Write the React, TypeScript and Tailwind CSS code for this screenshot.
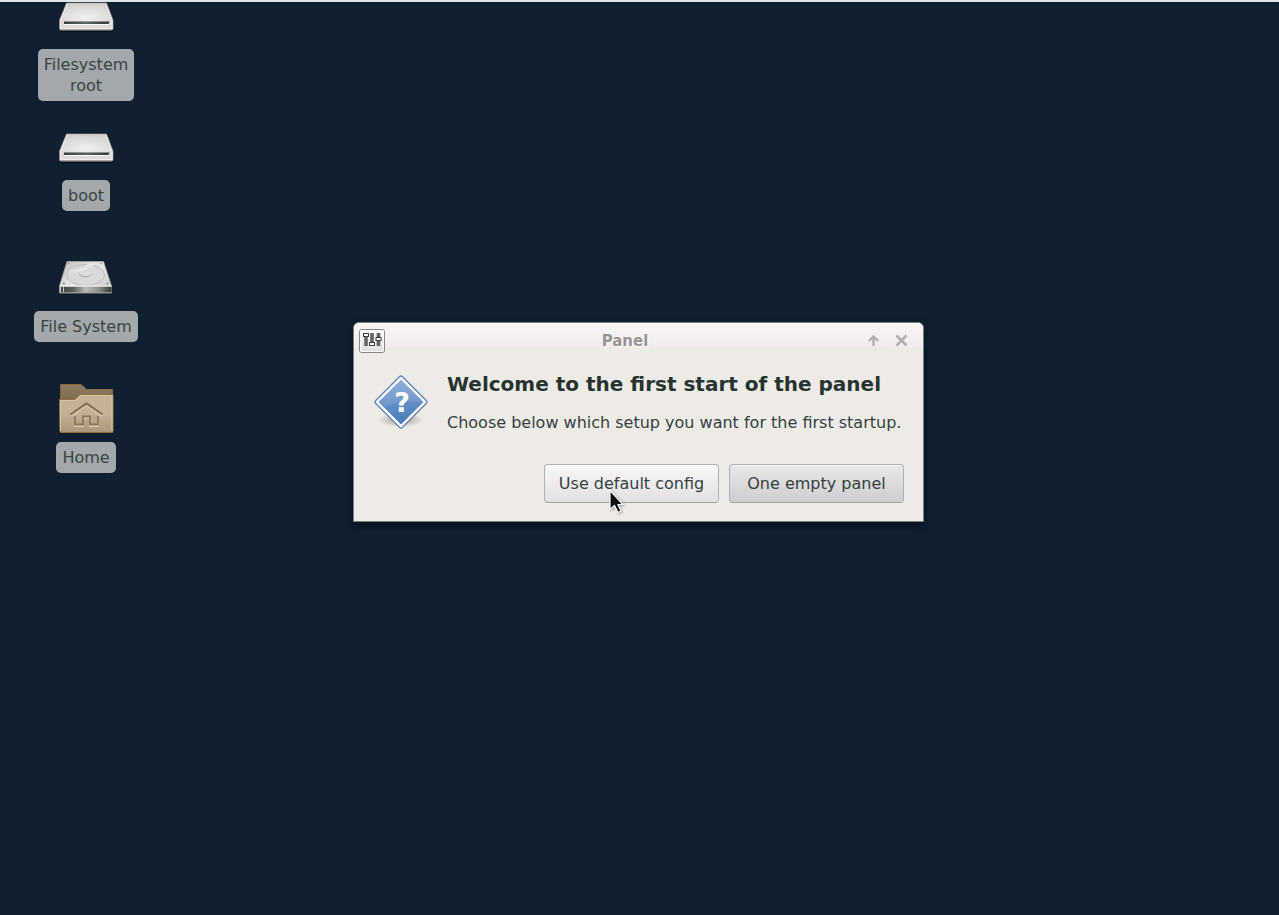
import type { ReactNode } from 'react';

function RemovableDrive() {
  return (
    <svg viewBox="0 0 60 60" className="size-[60px]" aria-hidden="true">
      <defs>
        <radialGradient id="lid" cx="0.5" cy="0.8" r="0.8">
          <stop offset="0" stopColor="#f1f0f1" />
          <stop offset="1" stopColor="#d3d0ce" />
        </radialGradient>
        <linearGradient id="slot" x1="0" x2="1">
          <stop offset="0" stopColor="#38423d" />
          <stop offset="0.5" stopColor="#5b6761" />
          <stop offset="1" stopColor="#303733" />
        </linearGradient>
      </defs>
      <path d="M4 43.500h53v1.500H4z" fill="#07101a" />
      <path d="M10.500 16h40l6.500 17v8.500q0 1.500-1.500 1.500H5q-1.500 0-1.500-1.500V33z" fill="#dedbda" stroke="#8f8f8d" strokeWidth="0.800" />
      <path d="M11 16.500h39L56 34H4.500z" fill="url(#lid)" />
      <path d="M11 17 4.500 33.500M50 17l6 16.500" stroke="#f3f2f1" strokeWidth="0.800" />
      <path d="M4.500 34v7.500H56V34" fill="none" stroke="#f1efee" />
      <path d="M8 34.500h45.500l-1 2.500H8z" fill="url(#slot)" />
      <path d="M8 37.500h44.500" stroke="#fff" />
      <path d="M4 42.800h52.500" stroke="#9a9a97" />
    </svg>
  );
}

function HardDisk() {
  return (
    <svg viewBox="0 0 60 60" className="size-[60px]" aria-hidden="true">
      <defs>
        <linearGradient id="disk" x1="0" x2="1" y2="1">
          <stop offset="0" stopColor="#c3c3c2" />
          <stop offset="0.5" stopColor="#e6e6e6" />
          <stop offset="1" stopColor="#c4c4c3" />
        </linearGradient>
        <linearGradient id="front" x1="0" x2="1">
          <stop offset="0" stopColor="#3c3f3d" />
          <stop offset="0.25" stopColor="#5a605d" />
          <stop offset="0.5" stopColor="#b9bbb8" />
          <stop offset="0.75" stopColor="#8b908c" />
          <stop offset="1" stopColor="#303c3b" />
        </linearGradient>
      </defs>
      <path d="M5 44h51v1.500H5z" fill="#07101a" />
      <path d="M11 12.500h36.500L55.500 37v7H3.500v-7z" fill="url(#disk)" stroke="#a5a6a4" strokeWidth="0.800" />
      <ellipse cx="29.500" cy="26" rx="19" ry="10.500" fill="#d9d9d8" stroke="#bdbdbc" />
      <path d="M13 22q12 2 20-3t13-4q-8-2-15 0 0 5-18 7z" fill="#e6e6e6" />
      <ellipse cx="29.500" cy="25" rx="6" ry="2.500" fill="#dededd" />
      <path d="M23.500 24.500v1q6 4.500 12 0v-1" fill="none" stroke="#a8a8a7" />
      <path d="M4 37.500h51.500v6H4z" fill="url(#front)" />
      <path d="M4 37h51.500" stroke="#f4f4f3" />
      <path d="M4.500 37v6M7.500 38v5" stroke="#c9cac8" />
      <path d="M4 43.800h51.500" stroke="#8e908d" strokeWidth="0.800" />
      <circle cx="8" cy="34.500" r="1" fill="#838482" />
      <circle cx="51.500" cy="34.500" r="1" fill="#838482" />
      <circle cx="12.500" cy="14.500" r="0.700" fill="#838482" />
      <circle cx="45" cy="14.500" r="0.700" fill="#838482" />
    </svg>
  );
}

function HomeFolder() {
  return (
    <svg viewBox="0 0 60 60" className="size-[60px]" aria-hidden="true">
      <defs>
        <linearGradient id="back" y2="1" x2="0">
          <stop offset="0" stopColor="#8e7b5f" />
          <stop offset="1" stopColor="#736148" />
        </linearGradient>
        <linearGradient id="face" y2="1" x2="0">
          <stop offset="0" stopColor="#c6b193" />
          <stop offset="0.500" stopColor="#c4b198" />
          <stop offset="1" stopColor="#ab9576" />
        </linearGradient>
      </defs>
      <path d="M4 52h53v1.500H4z" fill="#07101a" />
      <path d="M4.500 4.500h20.500l5.500 5h26V30h-52z" fill="url(#back)" stroke="#8b6a36" />
      <path d="M3.500 19.500h15.500l5-5h33v37q0 1-1 1h-51q-1 0-1-1z" fill="url(#face)" stroke="#91703f" />
      <path d="M4.500 51V20.500h15l5-5H56V51" fill="none" stroke="#d8c5a8" />
      <path d="M15 36 30.500 25 46 36" fill="none" stroke="#dccab0" strokeWidth="2" />
      <path d="M14.500 34.500 30.500 23.500l16 11" fill="none" stroke="#806b4d" strokeWidth="2" />
      <path d="M19 37v9h8V38h7v8h8v-9" fill="none" stroke="#dccab0" strokeWidth="2" />
      <path d="M19 36v8.500h8V36.500h7v8h8V36" fill="none" stroke="#8c7657" strokeWidth="1.800" />
    </svg>
  );
}

function QuestionIcon() {
  return (
    <svg viewBox="0 0 60 60" className="size-[60px] shrink-0" aria-hidden="true">
      <defs>
        <linearGradient id="sign" x2="0" y2="1">
          <stop offset="0" stopColor="#82a8d6" />
          <stop offset="0.5" stopColor="#648fc8" />
          <stop offset="1" stopColor="#477cb9" />
        </linearGradient>
        <radialGradient id="ground">
          <stop offset="0" stopColor="#9d9894" />
          <stop offset="1" stopColor="#9d9894" stopOpacity="0" />
        </radialGradient>
      </defs>
      <ellipse cx="30" cy="48" rx="23" ry="7" fill="url(#ground)" />
      <path d="M28.500 4.800 4.800 28.500q-1.500 1.500 0 3L28.500 55.200q1.500 1.500 3 0l23.700-23.700q1.500-1.500 0-3L31.500 4.800q-1.500-1.500-3 0z" fill="#fff" stroke="#6187bb" strokeWidth="1.400" />
      <path d="M30 7.500 52.500 30 30 52.500 7.500 30z" fill="url(#sign)" />
      <path d="M30 7.500 52.500 30Q30 26 13 35.500L7.500 30z" fill="#fff" opacity="0.100" />
      <text x="31" y="40" textAnchor="middle" fill="#fff" fontSize="27" fontWeight="700" fontFamily="DejaVu Sans, sans-serif">?</text>
    </svg>
  );
}

function PanelIcon() {
  return (
    <svg viewBox="0 0 26 24" className="h-6 w-[26px]" aria-hidden="true">
      <defs>
        <linearGradient id="plate" x2="0" y2="1">
          <stop offset="0" stopColor="#fff" />
          <stop offset="1" stopColor="#dededd" />
        </linearGradient>
      </defs>
      <rect x="0.500" y="0.500" width="25" height="23" rx="2" fill="url(#plate)" stroke="#878785" />
      <rect x="1.500" y="1.500" width="23" height="21" rx="1" fill="none" stroke="#fff" />
      <path d="M7 4v13M13 4v13M19.500 4v13" stroke="#616461" strokeWidth="3.600" />
      <rect x="4.500" y="4.500" width="5" height="3" fill="#fff" stroke="#3c403d" />
      <rect x="10.500" y="13.500" width="5" height="3" fill="#fff" stroke="#3c403d" />
      <rect x="17" y="8.500" width="5" height="3" fill="#fff" stroke="#3c403d" />
    </svg>
  );
}

function DesktopItem({ icon, label }: { icon: ReactNode; label: string }) {
  return (
    <li className="flex h-[131px] flex-col items-center gap-0.5">
      {icon}
      <span className="rounded-[5px] bg-[#a2a8ab] px-1.5 py-[5px] text-center whitespace-pre text-[#384544]">{label}</span>
    </li>
  );
}

const buttonClass =
  'h-[39px] w-[175px] rounded-[4px] border border-[#b2b0af] border-b-[#a2a09e] bg-linear-to-b whitespace-nowrap shadow-[inset_0_1px_0_#ffffffa0]';

export default function App() {
  return (
    <main className="relative min-h-screen overflow-hidden border-t-2 border-[#dfe5e9] bg-[#102030] font-['DejaVu_Sans',sans-serif] text-base leading-[21px] text-[#34413f]">
      <ul className="absolute -top-[15px] left-[20px] w-[132px]">
        <DesktopItem icon={<RemovableDrive />} label={'Filesystem\nroot'} />
        <DesktopItem icon={<RemovableDrive />} label="boot" />
        <DesktopItem icon={<HardDisk />} label="File System" />
        <DesktopItem icon={<HomeFolder />} label="Home" />
      </ul>

      <section
        role="dialog"
        aria-labelledby="window-title"
        className="absolute top-[320px] left-[353px] w-[571px] rounded-t-[6px] border border-[#77807f] bg-[#eeebe7] shadow-[0_4px_10px_#00101ccc]"
      >
        <header className="flex h-6 items-center rounded-t-[5px] bg-linear-to-b from-[#f8f6f6] to-[#f4ebeb] pr-3.5 pl-[5px]">
          <div className="mt-3">
            <PanelIcon />
          </div>
          <h1 id="window-title" className="mt-3 flex-1 text-center text-[15px] font-bold text-[#949694] [text-shadow:1px_1px_0_#fff]">
            Panel
          </h1>
          <div className="mt-3 flex gap-3">
            <button type="button" aria-label="Shade window" className="size-4">
              <svg viewBox="0 0 16 16" className="size-4" fill="none" stroke="#b1afae" strokeWidth="2.400">
                <path d="M8.500 13V4M4 8l4.500-4.500L13 8" />
              </svg>
            </button>
            <button type="button" aria-label="Close window" className="size-4">
              <svg viewBox="0 0 16 16" className="size-4" fill="none" stroke="#b1afae" strokeWidth="2.600">
                <path d="m3.500 2.500 10 10M13.500 2.500l-10 10" />
              </svg>
            </button>
          </div>
        </header>

        <div className="flex gap-4 pt-[25px] pl-[17px]">
          <QuestionIcon />
          <div>
            <h2 className="text-xl leading-6 font-bold whitespace-nowrap text-[#263430]">Welcome to the first start of the panel</h2>
            <p className="mt-4 whitespace-nowrap">Choose below which setup you want for the first startup.</p>
          </div>
        </div>

        <div className="flex justify-end gap-2.5 pt-[31px] pr-[19px] pb-[18px]">
          <button type="button" className={`${buttonClass} from-[#f8f7f8] to-[#e3e0e2]`}>
            Use default config
          </button>
          <button type="button" className={`${buttonClass} from-[#e9e8e9] to-[#cfcdcd]`}>
            One empty panel
          </button>
        </div>
      </section>

      <svg viewBox="0 0 18 28" className="pointer-events-none absolute top-[487px] left-[608px] h-7 w-[18px] drop-shadow-[1px_1px_1px_#0005]" aria-hidden="true">
        <path d="M2 1.500v19l4.500-4L10 23.500l3-1.500-3-6.500h5z" fill="#111" stroke="#fff" strokeWidth="1.200" />
      </svg>
    </main>
  );
}
